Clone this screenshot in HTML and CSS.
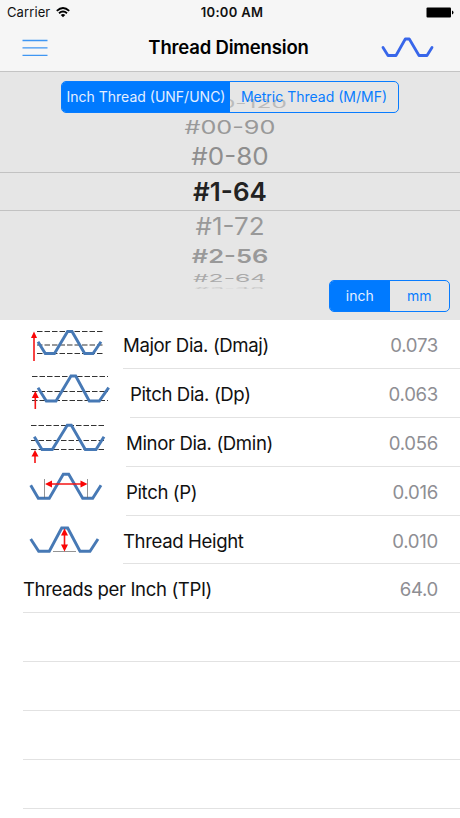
FILE: index.html
```html
<!DOCTYPE html>
<html lang="en">
<head>
<meta charset="utf-8">
<title>Thread Dimension</title>
<link rel="stylesheet" href="styles.css">
</head>
<body>
<header>
  <div class="status">
    <div class="carrier"><span>Carrier</span>
      <svg width="14" height="11" viewBox="0 0 14 11" fill="none" stroke="#000" stroke-width="1.9"><path d="M.8 3.9Q7-1.7 13.2 3.9M3 6.3Q7 2.8 11 6.3"/><path d="M7 10.2 4.7 7.9Q7 6.1 9.3 7.9Z" fill="#000" stroke="none"/></svg>
    </div>
    <span class="clock">10:00 AM</span>
    <svg class="battery" width="28" height="11" viewBox="0 0 28 11"><rect x=".5" y=".5" width="24.5" height="10" rx="1"/><path d="M26 3.5Q27.5 4 27.5 5.5T26 7.5Z"/></svg>
  </div>
  <div class="nav">
    <svg width="26" height="18" viewBox="0 0 26 18" stroke="#3f96f3" stroke-width="1.3"><path d="M.5 1.5h25M.5 8.8h25M.5 16.3h25"/></svg>
    <h1>Thread Dimension</h1>
    <svg width="54" height="22" viewBox="381 36.5 54 22" fill="none" stroke="#3866ea" stroke-width="2.8" stroke-linejoin="round" stroke-linecap="round"><path d="M383 47l5 8h8l9.3-16.5h4l9.7 16.5h8l5-8"/></svg>
  </div>
</header>
<section class="picker">
  <div class="wheel">
    <div class="r0"><span>#000-120</span></div>
    <div class="r1"><span>#00-90</span></div>
    <div class="r2"><span>#0-80</span></div>
    <div class="r3"><span>#1-64</span></div>
    <div class="r4"><span>#1-72</span></div>
    <div class="r5"><span>#2-56</span></div>
    <div class="r6"><span>#2-64</span></div>
    <div class="r7"><span>#3-48</span></div>
  </div>
  <div class="segments system"><span class="on">Inch Thread (UNF/UNC)</span><span>Metric Thread (M/MF)</span></div>
  <div class="segments units"><span class="on">inch</span><span>mm</span></div>
</section>
<main>
  <div class="row">
    <svg viewBox="20 320 100 48"><path class="dash" d="M37 331.5h66M37 345h66M37 353.5h66"/><path class="wave" d="M38 341.7 45.3 353.5H54.5L67.6 331.5H72L84.7 353.5H93L101 341.7"/><path class="arrow" d="M34 361V336"/><path class="tip" d="M34 331.5l3 6.5h-6z"/></svg>
    <div class="cell w0"><span class="label">Major Dia. (Dmaj)</span><span class="value">0.073</span></div>
  </div>
  <div class="row">
    <svg viewBox="20 369 100 48"><path class="dash" d="M32 376.5h76M32 391.5h76M32 400.5h76"/><path class="wave" d="M38 387.7 46.3 401H56L71 376H75.7L89.3 401H99.3L108.7 387.7"/><path class="arrow" d="M35.3 409V396"/><path class="tip" d="M35.3 391l3.5 7h-7z"/></svg>
    <div class="cell w1"><span class="label">Pitch Dia. (Dp)</span><span class="value">0.063</span></div>
  </div>
  <div class="row">
    <svg viewBox="20 418 100 48"><path class="dash" d="M31 425.5h73M31 440.5h73M31 449.5h73"/><path class="wave" d="M34.3 436.7 42 449.5H52.3L67.3 425.3H71.3L85.3 449.5H96L104 436.7"/><path class="arrow" d="M35 463V455"/><path class="tip" d="M35 450l3.5 6.5h-7z"/></svg>
    <div class="cell w2"><span class="label">Minor Dia. (Dmin)</span><span class="value">0.056</span></div>
  </div>
  <div class="row">
    <svg viewBox="20 467 100 48"><path class="wave" d="M30.7 485.3 38.3 498.3H49.3L63.3 474.3H68.7L82.7 498.3H92.7L101 485.3"/><path class="guide" d="M44.5 479v19M87.5 479v19"/><path class="arrow" d="M49 484H83"/><path class="tip" d="M45 484l7-3.4v6.8zM87.5 484l-7-3.4v6.8z"/></svg>
    <div class="cell w3"><span class="label">Pitch (P)</span><span class="value">0.016</span></div>
  </div>
  <div class="row">
    <svg viewBox="20 516 100 48"><path class="wave" d="M30.7 539 38.7 551.3H49.3L61.7 528H67.7L80 551.3H90L98 539"/><path class="guide" d="M53 551.5h23"/><path class="arrow" d="M64.5 533V547"/><path class="tip" d="M64.5 528.5l3.5 7h-7zM64.5 551.5l3.5-7h-7z"/></svg>
    <div class="cell w4"><span class="label">Thread Height</span><span class="value">0.010</span></div>
  </div>
  <div class="row"><div class="cell full"><span class="label">Threads per Inch (TPI)</span><span class="value">64.0</span></div></div>
  <div class="row"><div class="cell full"></div></div>
  <div class="row"><div class="cell full"></div></div>
  <div class="row"><div class="cell full"></div></div>
  <div class="row"><div class="cell full"></div></div>
</main>
</body>
</html>
```
FILE: styles.css
```css
* { box-sizing: border-box; }
body { margin: 0; width: 460px; height: 818px; overflow: hidden; background: #fff; color: #111; font-family: Inter, sans-serif; }
svg { display: block; flex: none; }
header { height: 72px; background: #f6f6f6; border-bottom: 1px solid #c4c4c4; }
.status { height: 24px; display: grid; grid-template-columns: 1fr auto 1fr; align-items: center; padding: 0 6px 0 7px; font-size: 13px; }
.carrier { display: flex; align-items: center; gap: 6px; letter-spacing: .1px; }
.clock { font-weight: 600; letter-spacing: .3px; padding-left: 3px; }
.battery { justify-self: end; }
.nav { height: 47px; display: grid; grid-template-columns: 1fr auto 1fr; align-items: center; padding: 0 25px 0 22px; }
.nav svg:last-child { justify-self: end; }
h1 { margin: -2px 0 0; font-size: 18.5px; font-weight: 600; letter-spacing: -.18px; color: #000; }
.picker { position: relative; height: 248px; background: #e6e6e6; padding-top: 23px; }
.wheel > div { display: flex; justify-content: center; align-items: center; font-size: 26px; line-height: 1; color: #999; white-space: nowrap; }
.wheel .r0 { height: 18px; color: #bbb; }
.wheel .r1 { height: 29px; }
.wheel .r2 { height: 30px; color: #8e8e8e; }
.wheel .r3 { height: 39px; border: solid #c2c2c2; border-width: 1px 0; color: #222; font-weight: 600; }
.wheel .r4 { height: 32px; }
.wheel .r5 { height: 28px; font-weight: 600; }
.wheel .r6 { height: 14px; color: #aaa; }
.wheel .r7 { height: 6px; color: #c8c8c8; }
.r0 span { transform: scale(.94, .45); }
.r1 span { transform: scale(.97, .7); }
.r2 span { transform: scaleY(.91); }
.r4 span { transform: scaleY(.92); }
.r5 span { transform: scale(.98, .72); }
.r6 span { transform: scale(.95, .42); }
.r7 span { transform: scale(.9, .1); }
.segments { position: absolute; display: grid; height: 32px; border: 1px solid #087cff; border-radius: 5px; overflow: hidden; color: #087cff; font-size: 14px; }
.segments span { display: flex; align-items: center; justify-content: center; white-space: nowrap; padding-bottom: 1px; }
.segments .on { background: #007aff; color: #e4efff; }
.system { left: 61px; top: 9px; width: 338px; grid-template-columns: 1fr 1fr; }
.units { left: 329px; top: 208px; width: 121px; grid-template-columns: 1fr 1fr; }
.row { height: 48.9px; display: flex; justify-content: flex-end; }
.row svg { width: 100px; height: 48px; margin-right: auto; margin-left: 20px; }
.cell { display: flex; align-items: center; justify-content: space-between; border-bottom: 1px solid #e2e2e2; padding: 2px 22px 0 0; font-size: 18.6px; }
.w0, .w4 { width: 337px; }
.w1 { width: 330px; }
.w2, .w3 { width: 334px; }
.full { width: 437px; }
.label { letter-spacing: -.38px; }
.value { color: #8e8e93; letter-spacing: -.3px; }
.wave { fill: none; stroke: #4779b5; stroke-width: 2.9; }
.dash { fill: none; stroke: #333; stroke-width: 1; stroke-dasharray: 5.5 2; }
.guide { fill: none; stroke: #666; stroke-width: .7; }
.arrow { fill: none; stroke: #f51414; stroke-width: 1.6; }
.tip { fill: #fa0505; }
```
